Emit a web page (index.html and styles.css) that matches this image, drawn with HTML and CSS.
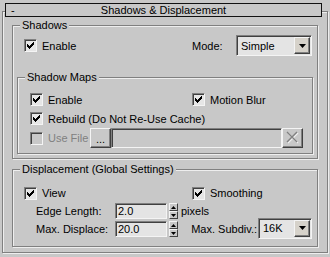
FILE: index.html
```html
<!DOCTYPE html>
<html lang="en">

<head>
    <meta charset="UTF-8" />
    <title>Shadows &amp; Displacement</title>
    <link rel="stylesheet" href="styles.css">
</head>

<body>
    <div class="rollout">
        <div class="rollout-title">
            <span class="collapse">-</span>
            <span class="rollout-name">Shadows &amp; Displacement</span>
            <span></span>
        </div>

        <div class="group group-shadows">
            <div class="legend">Shadows</div>
            <div class="row row-mode">
                <label class="opt opt-wide"><span class="check"><svg width="11" height="11"><path d="M8 2h1v1h-1z M7 3h2v1h-2z M2 4h1v1h-1z M6 4h3v1h-3z M2 5h2v1h-2z M5 5h3v1h-3z M2 6h5v1h-5z M3 7h3v1h-3z M4 8h1v1h-1z" /></svg></span>Enable</label>
                <span class="mode-label">Mode:</span>
                <div class="combo combo-mode">
                    <span class="combo-value">Simple</span>
                    <span class="combo-btn"><svg width="7" height="4"><polygon points="0,0 7,0 3.5,4" /></svg></span>
                </div>
            </div>

            <div class="group group-maps">
                <div class="legend">Shadow Maps</div>
                <div class="maps-body">
                    <div class="row row-check">
                        <label class="opt opt-maps"><span class="check"><svg width="11" height="11"><path d="M8 2h1v1h-1z M7 3h2v1h-2z M2 4h1v1h-1z M6 4h3v1h-3z M2 5h2v1h-2z M5 5h3v1h-3z M2 6h5v1h-5z M3 7h3v1h-3z M4 8h1v1h-1z" /></svg></span>Enable</label>
                        <label class="opt"><span class="check"><svg width="11" height="11"><path d="M8 2h1v1h-1z M7 3h2v1h-2z M2 4h1v1h-1z M6 4h3v1h-3z M2 5h2v1h-2z M5 5h3v1h-3z M2 6h5v1h-5z M3 7h3v1h-3z M4 8h1v1h-1z" /></svg></span>Motion Blur</label>
                    </div>
                    <div class="row row-check">
                        <label class="opt"><span class="check"><svg width="11" height="11"><path d="M8 2h1v1h-1z M7 3h2v1h-2z M2 4h1v1h-1z M6 4h3v1h-3z M2 5h2v1h-2z M5 5h3v1h-3z M2 6h5v1h-5z M3 7h3v1h-3z M4 8h1v1h-1z" /></svg></span>Rebuild (Do Not Re-Use Cache)</label>
                    </div>
                    <div class="row row-file">
                        <label class="opt opt-file disabled"><span class="check check-off"></span>Use File</label>
                        <span class="btn btn-dots">...</span>
                        <span class="file-field"></span>
                        <span class="btn btn-clear"><svg width="19" height="18"><path class="x-light" d="M5 4 L15 14 M15 4 L5 14" /><path class="x-dark" d="M4 3 L14 13 M14 3 L4 13" /></svg></span>
                    </div>
                </div>
            </div>
        </div>

        <div class="group group-disp">
            <div class="legend">Displacement (Global Settings)</div>
            <div class="row row-view">
                <label class="opt opt-wide"><span class="check"><svg width="11" height="11"><path d="M8 2h1v1h-1z M7 3h2v1h-2z M2 4h1v1h-1z M6 4h3v1h-3z M2 5h2v1h-2z M5 5h3v1h-3z M2 6h5v1h-5z M3 7h3v1h-3z M4 8h1v1h-1z" /></svg></span>View</label>
                <label class="opt"><span class="check"><svg width="11" height="11"><path d="M8 2h1v1h-1z M7 3h2v1h-2z M2 4h1v1h-1z M6 4h3v1h-3z M2 5h2v1h-2z M5 5h3v1h-3z M2 6h5v1h-5z M3 7h3v1h-3z M4 8h1v1h-1z" /></svg></span>Smoothing</label>
            </div>
            <div class="row row-spin">
                <span class="spin-label">Edge Length:</span>
                <span class="spin-field">2.0</span>
                <span class="spin-btns">
                    <span class="spin-btn"><svg width="5" height="3"><polygon points="2.5,0 5,3 0,3" /></svg></span>
                    <span class="spin-btn"><svg width="5" height="3"><polygon points="0,0 5,0 2.5,3" /></svg></span>
                </span>
                <span class="unit">pixels</span>
            </div>
            <div class="row row-spin">
                <span class="spin-label">Max. Displace:</span>
                <span class="spin-field">20.0</span>
                <span class="spin-btns">
                    <span class="spin-btn"><svg width="5" height="3"><polygon points="2.5,0 5,3 0,3" /></svg></span>
                    <span class="spin-btn"><svg width="5" height="3"><polygon points="0,0 5,0 2.5,3" /></svg></span>
                </span>
                <span class="subdiv-label">Max. Subdiv.:</span>
                <div class="combo combo-subdiv">
                    <span class="combo-value">16K</span>
                    <span class="combo-btn"><svg width="7" height="4"><polygon points="0,0 7,0 3.5,4" /></svg></span>
                </div>
            </div>
        </div>
    </div>
</body>

</html>
```

FILE: styles.css
```css
* {
    margin: 0;
    padding: 0;
    box-sizing: border-box;
}

body {
    width: 330px;
    height: 257px;
    overflow: hidden;
    background-color: #c8c8c8;
    color: #000;
    font-family: "Liberation Sans", Arial, sans-serif;
    font-size: 11px;
}

/* rollout frame, title bar sits over its top edge */
.rollout {
    margin: 11px 2px 0;
    height: 242px;
    border: 1px solid #808080;
    box-shadow: inset 1px 1px #eeeeee, 1px 1px #eeeeee;
}

.rollout-title {
    display: grid;
    grid-template-columns: 1fr auto 1fr;
    align-items: center;
    height: 14px;
    margin: -9px 5px 0 2px;
    border: 1px solid #111;
    background-color: #c8c8c8;
    line-height: 12px;
}

.collapse {
    padding-left: 5px;
}

/* group boxes */
.group {
    display: flex;
    flex-direction: column;
    border: 1px solid #808080;
    box-shadow: inset 1px 1px #eeeeee, 1px 1px #eeeeee;
}

.legend {
    align-self: flex-start;
    height: 13px;
    margin: -7px 0 0 7px;
    padding: 0 2px;
    line-height: 13px;
    background-color: #c8c8c8;
}

.group-shadows {
    height: 134px;
    margin: 8px 9px 0;
}

.group-maps {
    height: 77px;
    margin: 21px 4px 0;
}

.group-disp {
    height: 78px;
    margin: 10px 9px 0;
}

.row {
    display: flex;
    align-items: center;
}

.row-mode {
    height: 21px;
    margin-top: 3px;
    padding: 0 5px 0 11px;
}

.opt {
    display: flex;
    align-items: center;
    white-space: nowrap;
}

.opt-wide {
    width: 168px;
}

.opt-maps {
    width: 162px;
}

.opt-file {
    width: 60px;
}

.disabled {
    color: #808080;
}

.check {
    display: flex;
    width: 13px;
    height: 13px;
    margin-right: 5px;
    border: 1px solid;
    border-color: #808080 #f4f4f4 #f4f4f4 #808080;
    box-shadow: inset 1px 1px #404040;
    background-color: #e6e6e6;
}

.check svg {
    fill: #000;
    shape-rendering: crispEdges;
}

.check-off {
    background-color: #c8c8c8;
}

.mode-label {
    width: 44px;
}

/* dropdowns */
.combo {
    display: flex;
    align-items: center;
    height: 21px;
    padding: 1px 1px 1px 4px;
    border: 1px solid;
    border-color: #808080 #f4f4f4 #f4f4f4 #808080;
    box-shadow: inset 1px 1px #404040;
    background-color: #e4e4e4;
}

.combo-mode {
    width: 76px;
    margin-left: auto;
}

.combo-value {
    flex: 1;
}

.combo-btn {
    display: flex;
    align-items: center;
    justify-content: center;
    width: 16px;
    height: 17px;
    border: 1px solid;
    border-color: #f4f4f4 #404040 #404040 #f4f4f4;
    box-shadow: inset -1px -1px #808080;
    background-color: #d6d2ca;
}

.combo-btn svg {
    fill: #000;
}

/* shadow maps */
.maps-body {
    padding: 6px 9px 0 12px;
}

.row-check {
    height: 19px;
}

.row-file {
    height: 20px;
}

.btn {
    display: flex;
    align-items: center;
    justify-content: center;
    width: 21px;
    height: 20px;
    border: 1px solid;
    border-color: #f4f4f4 #404040 #404040 #f4f4f4;
    box-shadow: inset -1px -1px #808080;
    background-color: #c8c8c8;
}

.btn-dots {
    align-items: flex-end;
    padding-bottom: 3px;
    line-height: 10px;
}

.file-field {
    flex: 1;
    height: 20px;
    border: 1px solid;
    border-color: #808080 #f4f4f4 #f4f4f4 #808080;
    box-shadow: inset 1px 1px #404040;
}

.btn-clear svg {
    fill: none;
}

.x-light {
    stroke: #f0f0f0;
    stroke-width: 1.2;
}

.x-dark {
    stroke: #808080;
    stroke-width: 1.4;
}

/* displacement */
.row-view {
    height: 18px;
    margin-top: 8px;
    padding-left: 11px;
}

.row-spin {
    height: 18px;
    padding: 0 5px 0 23px;
}

.spin-label {
    width: 79px;
    white-space: nowrap;
}

.spin-field {
    width: 52px;
    height: 16px;
    padding-left: 2px;
    border: 1px solid;
    border-color: #808080 #f4f4f4 #f4f4f4 #808080;
    box-shadow: inset 1px 1px #404040;
    background-color: #e4e4e4;
    line-height: 14px;
}

.spin-btns {
    display: flex;
    flex-direction: column;
    width: 9px;
    height: 16px;
    margin-left: 2px;
}

.spin-btn {
    display: flex;
    align-items: center;
    justify-content: center;
    height: 8px;
    border: 1px solid;
    border-color: #f4f4f4 #404040 #404040 #f4f4f4;
    background-color: #c8c8c8;
}

.spin-btn svg {
    fill: #000;
}

.unit {
    margin-left: 3px;
}

.subdiv-label {
    margin-left: auto;
    margin-right: 1px;
    white-space: nowrap;
}

.combo-subdiv {
    width: 54px;
    margin-bottom: 2px;
}
```
